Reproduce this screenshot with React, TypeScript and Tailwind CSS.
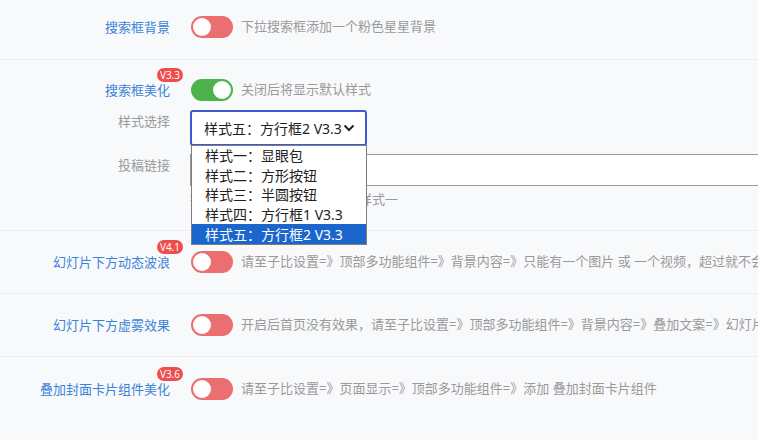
import React from "react";

const FONT = { fontFamily: '"Noto Sans", "Noto Sans CJK SC", sans-serif' };

function Toggle({ on }: { on: boolean }) {
  return (
    <div
      className={
        "relative h-[22px] w-[42px] shrink-0 rounded-full " +
        (on ? "bg-[#4db14c]" : "bg-[#ec6f70]")
      }
    >
      <div
        className={
          "absolute top-[2px] h-[18px] w-[18px] rounded-full bg-white " +
          (on ? "left-[22px]" : "left-[2px]")
        }
      />
    </div>
  );
}

function Badge({ text }: { text: string }) {
  return (
    <span className="absolute -top-[13px] -right-[13px] flex h-[14px] items-center rounded-[7px] bg-[#ef4d4d] px-[3px] text-[10px] leading-none text-white">
      {text}
    </span>
  );
}

function Label({ text, badge }: { text: string; badge?: string }) {
  return (
    <div className="flex w-[170px] shrink-0 justify-end">
      <span className="relative text-[13px] leading-[18px] text-[#3a84d8]">
        {text}
        {badge && <Badge text={badge} />}
      </span>
    </div>
  );
}

function SimpleRow({
  label,
  badge,
  desc,
  h,
  last,
}: {
  label: string;
  badge?: string;
  desc: string;
  h: string;
  last?: boolean;
}) {
  return (
    <div className={"flex items-center " + (last ? "" : "border-b border-[#ebedf0] ") + h}>
      <Label text={label} badge={badge} />
      <div className="ml-[21px] flex min-w-0 flex-1 items-center gap-[8px] overflow-hidden">
        <Toggle on={false} />
        <span className="whitespace-nowrap text-[13px] text-[#9a9a9a]">{desc}</span>
      </div>
    </div>
  );
}

const options = [
  "样式一：显眼包",
  "样式二：方形按钮",
  "样式三：半圆按钮",
  "样式四：方行框1 V3.3",
  "样式五：方行框2 V3.3",
];

export default function App() {
  return (
    <div className="h-[440px] w-[758px] overflow-hidden bg-[#f8f9fb]" style={FONT}>
      <div className="flex h-[60px] items-center border-b border-[#ebedf0] pb-[5px]">
        <Label text="搜索框背景" />
        <div className="ml-[21px] flex items-center gap-[8px]">
          <Toggle on={false} />
          <span className="whitespace-nowrap text-[13px] text-[#9a9a9a]">
            下拉搜索框添加一个粉色星星背景
          </span>
        </div>
      </div>

      <div className="flex h-[171px] flex-col border-b border-[#ebedf0] pt-[19px]">
        <div className="flex h-[22px] items-center">
          <Label text="搜索框美化" badge="V3.3" />
          <div className="ml-[21px] flex items-center gap-[8px]">
            <Toggle on={true} />
            <span className="whitespace-nowrap text-[13px] text-[#9a9a9a]">
              关闭后将显示默认样式
            </span>
          </div>
        </div>

        <div className="mt-[9px] flex">
          <div className="flex w-[170px] shrink-0 justify-end pt-[2px]">
            <span className="text-[13px] leading-[18px] text-[#999]">样式选择</span>
          </div>
          <div className="relative z-10 ml-[20px]">
            <div className="flex h-[36px] w-[177px] items-center rounded-[3px] border-2 border-[#4257d1] bg-white pl-[12px] pr-[10px]">
              <span className="whitespace-nowrap text-[14px] text-[#222]">样式五：方行框2 V3.3</span>
              <svg className="ml-auto" width="12" height="8" viewBox="0 0 12 8">
                <path d="M1.5 1.5 L6 6 L10.5 1.5" fill="none" stroke="#222" strokeWidth="2" />
              </svg>
            </div>
            <div className="absolute left-[1px] top-[35px] w-[176px] border border-[#7d7d7d] bg-white">
              {options.map((o, i) => (
                <div
                  key={o}
                  className={
                    "flex h-[19.6px] items-center whitespace-nowrap pl-[13px] text-[14px] " +
                    (i === 4 ? "bg-[#1b66cd] text-white" : "text-[#222]")
                  }
                >
                  {o}
                </div>
              ))}
            </div>
          </div>
        </div>

        <div className="mt-[8px] flex">
          <div className="flex w-[170px] shrink-0 justify-end pt-[2px]">
            <span className="text-[13px] leading-[18px] text-[#999]">投稿链接</span>
          </div>
          <div className="ml-[20px] h-[32px] flex-1 border border-r-0 border-[#9a9a9a] bg-white" />
        </div>

        <div className="mt-[4px] flex">
          <div className="w-[170px] shrink-0" />
          <span className="ml-[20px] whitespace-nowrap text-[13px] leading-[18px] text-[#9a9a9a]">
            投稿按钮跳转链接，仅适用于样式一
          </span>
        </div>
      </div>

      <SimpleRow
        h="h-[63px]"
        label="幻灯片下方动态波浪"
        badge="V4.1"
        desc="请至子比设置=》顶部多功能组件=》背景内容=》只能有一个图片 或 一个视频，超过就不会显示"
      />
      <SimpleRow
        h="h-[63px]"
        label="幻灯片下方虚雾效果"
        desc="开启后首页没有效果，请至子比设置=》顶部多功能组件=》背景内容=》叠加文案=》幻灯片"
      />
      <SimpleRow
        h="h-[63px]"
        last
        label="叠加封面卡片组件美化"
        badge="V3.6"
        desc="请至子比设置=》页面显示=》顶部多功能组件=》添加 叠加封面卡片组件"
      />
    </div>
  );
}
